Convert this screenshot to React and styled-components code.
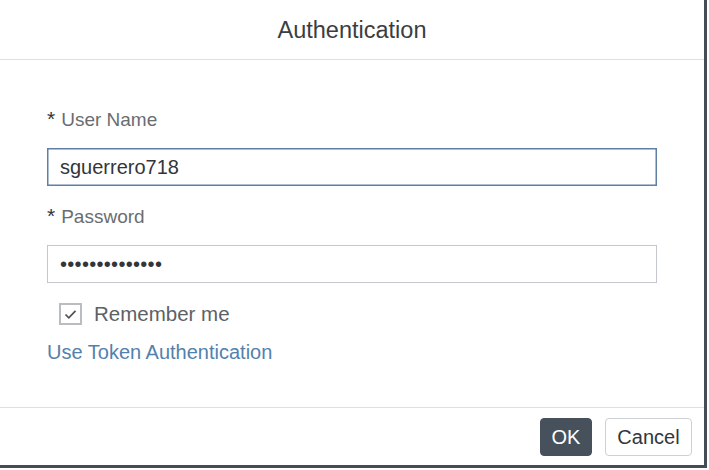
import React from "react";
import styled, { createGlobalStyle } from "styled-components";

const GlobalStyle = createGlobalStyle`
  html, body {
    margin: 0;
    padding: 0;
    background: #ffffff;
    font-family: "Liberation Sans", Arial, sans-serif;
  }
`;

const Dialog = styled.div`
  width: 707px;
  height: 468px;
  box-sizing: border-box;
  background: #ffffff;
  border-right: 3px solid #454c55;
  border-bottom: 3px solid #454c55;
  display: flex;
  flex-direction: column;
`;

const Header = styled.div`
  height: 60px;
  box-sizing: border-box;
  border-bottom: 1px solid #dbe0e6;
  display: flex;
  align-items: center;
  justify-content: center;
  padding-top: 2px;
  font-size: 23.5px;
  color: #3a3e43;
`;

const Body = styled.div`
  flex: 1;
  padding: 48px 47px 0 47px;
  display: flex;
  flex-direction: column;
`;

const Label = styled.div`
  display: flex;
  align-items: center;
  height: 24px;
  font-size: 19px;
  color: #6a6d70;
  margin-top: ${(p) => p.$top || 0}px;
`;

const Star = styled.span`
  color: #32363a;
  font-size: 21px;
  margin-right: 6px;
  position: relative;
  top: -1px;
`;

const Input = styled.input`
  box-sizing: border-box;
  width: 610px;
  height: 38px;
  margin-top: 16px;
  padding: 0 12px;
  border: 1px solid ${(p) => (p.$focused ? "#5f7fa3" : "#c4c8cc")};
  box-shadow: ${(p) => (p.$focused ? "inset 0 0 0 0.5px #5f7fa3" : "none")};
  border-radius: 0;
  background: #ffffff;
  font-family: "Liberation Sans", Arial, sans-serif;
  font-size: 20px;
  color: #32363a;
  outline: none;
  letter-spacing: ${(p) => (p.$dots ? "0.3px" : "0")};
`;

const CheckRow = styled.label`
  display: flex;
  align-items: center;
  margin-top: 20px;
  margin-left: 12px;
  height: 22px;
  gap: 12px;
  font-size: 20.5px;
  color: #5d6166;
`;

const Box = styled.span`
  width: 23px;
  height: 22px;
  box-sizing: border-box;
  border: 2px solid #b9bdc2;
  background: #ffffff;
  display: flex;
  align-items: center;
  justify-content: center;
`;

const Link = styled.a`
  display: block;
  margin-top: 15px;
  height: 24px;
  line-height: 24px;
  font-size: 20px;
  color: #5381ad;
  text-decoration: none;
`;

const Footer = styled.div`
  height: 58px;
  box-sizing: border-box;
  border-top: 1px solid #dbe0e6;
  display: flex;
  justify-content: flex-end;
  align-items: flex-start;
  padding: 10px 12px 0 0;
  gap: 13px;
`;

const Button = styled.button`
  height: 38px;
  width: ${(p) => (p.$primary ? "52px" : "87px")};
  box-sizing: border-box;
  padding: 0;
  border-radius: 4px;
  border: 1px solid ${(p) => (p.$primary ? "#46515c" : "#cdd1d5")};
  background: ${(p) => (p.$primary ? "#46515c" : "#ffffff")};
  color: ${(p) => (p.$primary ? "#ffffff" : "#32363a")};
  font-family: "Liberation Sans", Arial, sans-serif;
  font-size: 20px;
`;

export default function App() {
  return (
    <>
      <GlobalStyle />
      <Dialog>
        <Header>Authentication</Header>
        <Body>
          <Label>
            <Star>*</Star>User Name
          </Label>
          <Input $focused defaultValue="sguerrero718" />
          <Label $top={19}>
            <Star>*</Star>Password
          </Label>
          <Input $dots defaultValue={"\u2022".repeat(14)} />
          <CheckRow>
            <Box>
              <svg width="13" height="11" viewBox="0 0 13 11">
                <polyline
                  points="1.5,5.5 4.8,8.8 11.5,1.8"
                  fill="none"
                  stroke="#4d5257"
                  strokeWidth="1.7"
                />
              </svg>
            </Box>
            Remember me
          </CheckRow>
          <Link href="#">Use Token Authentication</Link>
        </Body>
        <Footer>
          <Button $primary>OK</Button>
          <Button>Cancel</Button>
        </Footer>
      </Dialog>
    </>
  );
}
